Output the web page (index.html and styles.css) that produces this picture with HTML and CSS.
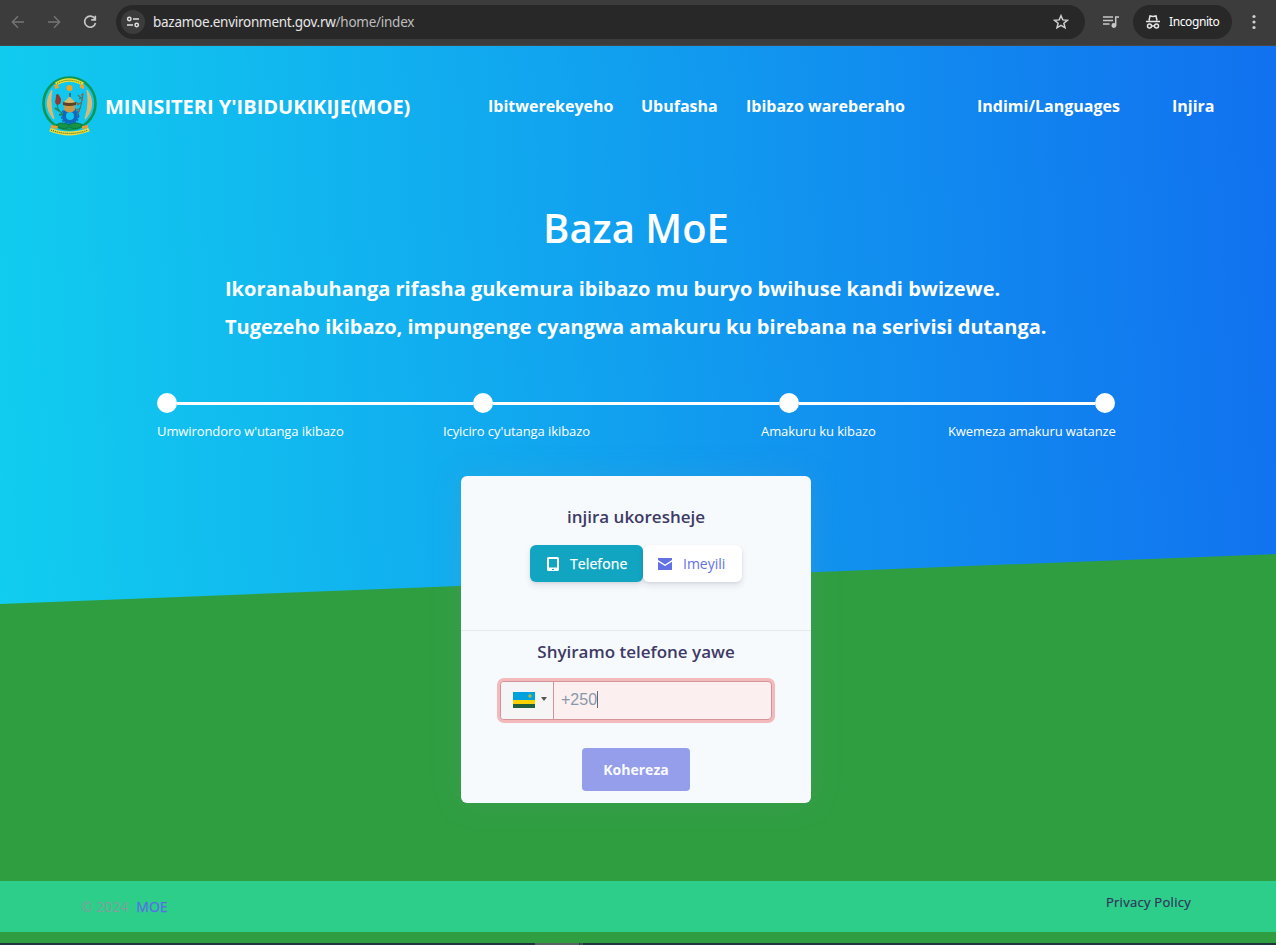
FILE: index.html
```html
<!DOCTYPE html>
<html lang="rw">
<head>
<meta charset="utf-8">
<title>Baza MoE</title>
<link rel="stylesheet" href="styles.css">
</head>
<body>
<header class="browser">
  <svg class="nav-icon dim" viewBox="0 0 16 16"><path d="M14 8H2.500M8 2.300 2.300 8 8 13.700"/></svg>
  <svg class="nav-icon dim" viewBox="0 0 16 16"><path d="M2 8h11.500M8 2.300 13.700 8 8 13.700"/></svg>
  <svg class="nav-icon" viewBox="0 0 16 16"><path d="M12.700 4.600A5.500 5.500 0 1 0 13.500 9M13.300 1.800v4.100H9.200"/></svg>
  <div class="omnibox">
    <span class="site-info"><svg viewBox="0 0 14 14"><circle cx="3.300" cy="4" r="1.700"/><path d="M7 4h6M1 10h6"/><circle cx="10.700" cy="10" r="1.700"/></svg></span>
    <span class="url">bazamoe.environment.gov.rw<span class="path">/home/index</span></span>
    <svg class="star" viewBox="0 0 16 16"><path d="m8 1.700 1.800 4.200 4.600.4-3.500 3 1.100 4.500L8 11.400l-4 2.400 1.100-4.500-3.500-3 4.600-.4z"/></svg>
  </div>
  <svg class="media" viewBox="0 0 16 14"><path d="M0 2h10M0 5.500h10M0 9h6.500M12.700 10.500V2H16"/><circle cx="10.900" cy="10.500" r="1.700"/></svg>
  <div class="incognito">
    <svg viewBox="0 0 16 16"><path d="M4 6.500 5 2l3 .6L11 2l1 4.500M1 7.500h14M6.500 12h3"/><circle cx="4.500" cy="12" r="2"/><circle cx="11.500" cy="12" r="2"/></svg>
    <span>Incognito</span>
  </div>
  <svg class="dots" viewBox="0 0 4 16"><circle cx="2" cy="2.500" r="1.600"/><circle cx="2" cy="8" r="1.600"/><circle cx="2" cy="13.500" r="1.600"/></svg>
</header>

<main class="page">
  <nav class="navbar">
    <svg class="crest" viewBox="0 0 56 62">
      <circle cx="27.500" cy="28.500" r="26" fill="none" stroke="#0c9854" stroke-width="2.600"/>
      <path d="M14 9q13-8 27 0" fill="none" stroke="#e7df36" stroke-width="3.500"/>
      <path d="M15 8.500q12-6.500 25 0" fill="none" stroke="#50651f" stroke-width="1" stroke-dasharray="1 1"/>
      <path d="m12 10 4-1 1 4-4 1zM38 9l4 1 0 4-4-1z" fill="#eda42b"/>
      <circle cx="27.500" cy="13" r="3" fill="#f5a31c"/>
      <path d="M10 15Q0 30 12 44 7 30 10 15M45 15q10 15-2 29 5-14 2-29" fill="#d9bb72" stroke="#d9bb72" stroke-width="1.200"/>
      <circle cx="28" cy="41" r="6" fill="none" stroke="#1268bd" stroke-width="4"/>
      <circle cx="28" cy="41" r="8.500" fill="none" stroke="#1268bd" stroke-width="1.500" stroke-dasharray="2 1.400"/>
      <path d="m28 19-1 3-6 6h13l-6-6z" fill="#d8b86a"/>
      <path d="M28 18v4" stroke="#3b3526"/>
      <path d="M22 29h11v6q-5 5-11 0z" fill="#c69a49"/>
      <path d="M21 27q7 2 13 0v3q-7 2-13 0z" fill="#5b4225"/>
      <path d="M16 24q-3 10 5 15" fill="none" stroke="#258850" stroke-width="1.300"/>
      <path d="M14 20q2-3 4 2 2 3 0 7-4 2-5-2 1-3 1-7" fill="#933a2c"/>
      <path d="M13 33l4 3M17 40l4-1" stroke="#258850" stroke-width="2"/>
      <path d="M41 18q-1 12-6 23M37 24l4-2M35 30l5-3M34 35l5-2M36 20l3 3M34 27l3 3" fill="none" stroke="#54775d" stroke-width="1.200"/>
      <g fill="#a75c4c"><circle cx="36" cy="29" r="1"/><circle cx="40" cy="25" r="1"/><circle cx="37" cy="36" r="1"/><circle cx="40" cy="20" r="1"/></g>
      <path d="M14 50q6-4 13 0 7-4 14 0-6 6-14 2-7 4-13-2" fill="#159447" stroke="#087b46"/>
      <path d="M8 54.500q19 8 39 0" fill="none" stroke="#e9df45" stroke-width="4"/>
      <path d="M9 55q19 7 37 0" fill="none" stroke="#5c6425" stroke-width="1.200" stroke-dasharray="1 1"/>
      <path d="m9 50 7 1-1 3-6-1zM40 51l6-1v3l-6 1z" fill="#ed9d33"/>
    </svg>
    <span class="brand">MINISITERI Y'IBIDUKIKIJE(MOE)</span>
    <a>Ibitwerekeyeho</a><a>Ubufasha</a><a>Ibibazo wareberaho</a><a>Indimi/Languages</a><a>Injira</a>
  </nav>

  <section class="hero">
    <h1>Baza MoE</h1>
    <p class="lead">Ikoranabuhanga rifasha gukemura ibibazo mu buryo bwihuse kandi bwizewe.<br>Tugezeho ikibazo, impungenge cyangwa amakuru ku birebana na serivisi dutanga.</p>
  </section>

  <section class="steps">
    <div class="track"><i></i><b></b><i></i><b></b><i></i><b></b><i></i></div>
    <div class="labels"><span>Umwirondoro w'utanga ikibazo</span><span>Icyiciro cy'utanga ikibazo</span><span>Amakuru ku kibazo</span><span>Kwemeza amakuru watanze</span></div>
  </section>

  <section class="card">
    <div class="card-head">
      <h2>injira ukoresheje</h2>
      <div class="tabs">
        <button class="tab active"><svg viewBox="0 0 12 14"><path fill-rule="evenodd" d="M1.500 0h9Q12 0 12 1.500v11q0 1.500-1.500 1.500h-9Q0 14 0 12.500v-11Q0 0 1.500 0M2 2v8.500h8V2zM5 12v1h2v-1z"/></svg><span>Telefone</span></button>
        <button class="tab"><svg viewBox="0 0 14 12"><path d="M0 0h14v2L7 6.500 0 2zM0 3.800 7 8l7-4.200V12H0z"/></svg><span>Imeyili</span></button>
      </div>
    </div>
    <div class="card-body">
      <h2>Shyiramo telefone yawe</h2>
      <div class="phone">
        <div class="country">
          <svg class="flag" viewBox="0 0 22 16"><path fill="#00a1de" d="M0 0h22v8H0z"/><path fill="#fad201" d="M0 8h22v4H0z"/><path fill="#20603d" d="M0 12h22v4H0z"/><circle cx="17" cy="4" r="1.800" fill="#b5b83b"/></svg>
          <svg class="caret" viewBox="0 0 6 4"><path d="M0 0h6L3 4z"/></svg>
        </div>
        <div class="number"><span>+250</span><i class="cursor"></i></div>
      </div>
      <button class="submit"><span>Kohereza</span></button>
    </div>
  </section>

  <footer class="footer">
    <div class="copy"><span>© 2024</span><a>MOE</a></div>
    <a class="privacy">Privacy Policy</a>
  </footer>
</main>
<div class="taskbar"><i></i><b></b></div>
</body>
</html>
```
FILE: styles.css
```css
* { box-sizing: border-box; }
body { margin: 0; width: 1276px; height: 945px; overflow: hidden; font-family: "Open Sans", sans-serif; background: #2f9e41; color: #fff; white-space: nowrap; }
h1, h2, p { margin: 0; }
button { border: 0; padding: 0; font: inherit; }
svg { display: block; flex: none; }

.browser { height: 46px; background: #3c3c3c; border-bottom: 1px solid #484644; display: flex; align-items: center; padding: 0 0 2px 10px; }
.nav-icon { width: 16px; height: 16px; margin-right: 20px; fill: none; stroke: #c7c7c7; stroke-width: 1.7; }
.nav-icon.dim { stroke: #757575; stroke-width: 1.4; }
.omnibox { width: 969px; height: 34px; margin-left: -2px; border-radius: 17px; background: #282828; display: flex; align-items: center; padding: 0 16px 0 5px; }
.site-info { width: 24px; height: 24px; border-radius: 50%; background: #3c3c3c; display: grid; place-items: center; }
.site-info svg { width: 14px; height: 14px; fill: none; stroke: #e0e0e0; stroke-width: 1.5; }
.url { margin-left: 8px; flex: 1; font: 13.5px "Noto Sans", sans-serif; letter-spacing: -.26px; color: #e7e7e7; }
.path { color: #bebebe; }
.star { width: 16px; height: 16px; fill: none; stroke: #d0d0d0; stroke-width: 1.5; }
.media { width: 16px; height: 14px; margin-left: 18px; fill: none; stroke: #c7c7c7; stroke-width: 1.5; }
.media circle { fill: #c7c7c7; }
.incognito { width: 99px; height: 34px; margin-left: 14px; border-radius: 17px; background: #282828; display: flex; align-items: center; padding-left: 12px; font: 12px "Noto Sans", sans-serif; letter-spacing: -.4px; }
.incognito svg { width: 16px; height: 16px; margin-right: 8px; fill: none; stroke: #e4e4e4; stroke-width: 1.5; }
.dots { width: 4px; height: 16px; margin-left: 20px; fill: #d0d0d0; }

.page { position: relative; isolation: isolate; height: 897px; display: flex; flex-direction: column; }
.page::before { content: ""; position: absolute; z-index: -1; inset: 0 0 auto; height: 558px; background: linear-gradient(87deg, #11cdef, #1171ef); clip-path: polygon(0 0, 100% 0, 100% 508px, 0 100%); }
.navbar { height: 120px; padding: 0 0 0 42px; display: grid; grid-template-columns: 64px 382px 153px 105px 231px 195px 80px; align-items: center; font-size: 16px; font-weight: 700; }
.crest { width: 56px; height: 62px; }
.brand { margin-left: -1px; font-size: 20px; }

.hero { height: 227px; padding-top: 35px; }
h1 { margin-left: -4px; font-size: 40px; line-height: 54px; font-weight: 600; text-align: center; }
.lead { padding: 15px 0 0 225px; font-size: 20px; line-height: 38px; font-weight: 700; }
.steps { height: 83px; padding: 0 161px 0 157px; }
.track { display: flex; align-items: center; }
.track i { width: 20px; height: 20px; border-radius: 50%; background: #fff; }
.track b { flex: 1; height: 3px; background: #fff; }
.track b:nth-of-type(2) { flex: none; width: 286px; }
.labels { display: grid; grid-template-columns: 286px 318px 187px 167px; margin-top: 9px; font-size: 13px; line-height: 19px; letter-spacing: -.09px; }

.card { width: 350px; height: 327px; margin-left: 461px; border-radius: 6px; background: #f7fafc; box-shadow: 0 0 32px rgba(136,152,170,.15); color: #3e3a66; }
.card-head { height: 155px; border-bottom: 1px solid #e6eaee; padding-top: 28px; display: flex; flex-direction: column; align-items: center; }
h2 { font-size: 17px; line-height: 26px; font-weight: 600; }
.tabs { display: flex; margin-top: 15px; }
.tab { width: 113px; height: 37px; border-radius: 6px; background: #11a5c1; color: #fff; box-shadow: 0 4px 6px rgba(50,50,93,.11), 0 1px 3px rgba(0,0,0,.08); display: flex; align-items: center; padding-left: 17px; font-size: 14px; }
.tab + .tab { width: 99px; padding-left: 15px; background: #fff; color: #6272e4; }
.tab svg { width: 12px; height: 14px; margin-right: 11px; fill: currentColor; }
.tab.active { -webkit-text-stroke: .25px #fff; letter-spacing: .1px; }
.tab + .tab svg { width: 14px; height: 12px; }
.card-body { display: flex; flex-direction: column; align-items: center; padding-top: 8px; }
.phone { width: 272px; height: 39px; margin-top: 16px; border: 1px solid #d29498; border-radius: 4px; box-shadow: 0 0 0 3px #f3b9bb; display: flex; background: #fbefef; }
.country { width: 53px; border-right: 1px solid #d29498; border-radius: 3px 0 0 3px; background: #f5f5f5; display: flex; align-items: center; padding: 0 0 1px 12px; }
.flag { width: 22px; height: 16px; }
.caret { width: 6px; height: 4px; margin: -2px 0 0 6px; fill: #555; }
.number { display: flex; align-items: center; padding: 0 0 2px 7px; font: 16px "Liberation Sans", sans-serif; color: #8898aa; }
.cursor { width: 1px; height: 17px; background: #667; }
.submit { width: 108px; height: 43px; margin-top: 28px; border-radius: 4px; background: #949eeb; color: #fafbff; font-size: 14px; font-weight: 700; }

.footer { margin-top: 78px; height: 51px; background: #2dce89; display: flex; justify-content: space-between; padding: 11px 85px 0 81px; }
.copy { padding-top: 5px; font-size: 14px; line-height: 20px; color: #7f9f9e; display: flex; gap: 8px; }
.copy a { color: #5670e4; -webkit-text-stroke: .25px #5670e4; }
.privacy { font-size: 13px; line-height: 20px; color: #32325d; letter-spacing: .28px; -webkit-text-stroke: .2px #32325d; }
.taskbar { height: 2px; background: #203540; display: flex; padding-left: 535px; gap: 1px; }
.taskbar i { width: 44px; background: #576363; }
.taskbar b { width: 3px; background: #3e5652; }
```
